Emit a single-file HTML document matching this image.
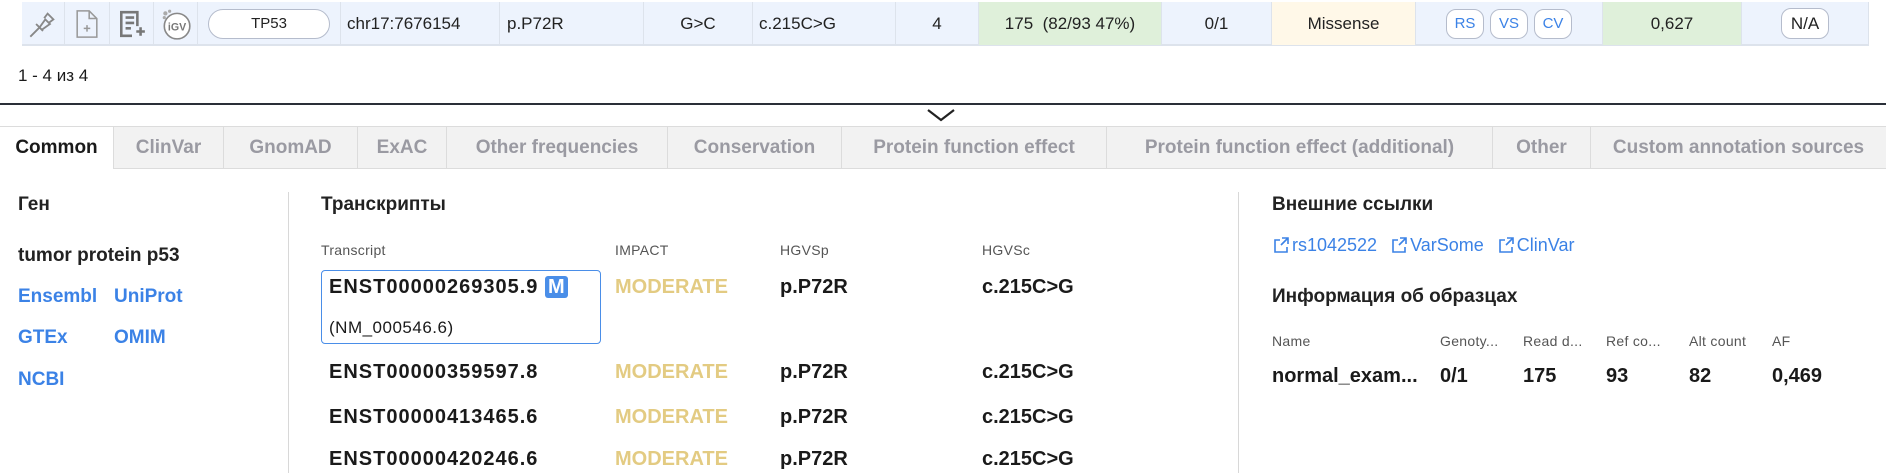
<!DOCTYPE html>
<html><head><meta charset="utf-8"><style>
*{margin:0;padding:0;box-sizing:border-box}
body{width:1886px;height:473px;overflow:hidden;background:#fff;font-family:"Liberation Sans",sans-serif;color:#1a1a1a;position:relative}
.a{position:absolute;white-space:nowrap}
.cell{position:absolute;top:2px;height:43px;border-right:1px solid #dde3ec;display:flex;align-items:center;justify-content:center;font-size:17px;color:#222}
.tab{position:absolute;top:127px;height:42px;border-right:1px solid #dcdcdc;display:flex;align-items:center;justify-content:center;font-size:19px;color:#9a9aa2;font-weight:bold;background:#f2f2f2}
.lnk{color:#3b82e6;font-weight:bold;font-size:19px}
.h{font-size:19px;font-weight:bold;color:#222}
.th{font-size:14px;color:#555;letter-spacing:0.3px}
.en{font-size:20px;font-weight:bold;color:#1a1a1a;letter-spacing:1px}
.mod{font-size:20px;font-weight:bold;color:#e3cb82}
.pv{font-size:20px;font-weight:bold}
.sv{font-size:20px;font-weight:bold}
.pill{border:1px solid #b5bccc;border-radius:10px;height:30px;display:inline-flex;align-items:center;justify-content:center;background:#fff}
.ext{display:inline-block;vertical-align:-2px;margin-right:3px}
</style></head><body>
<div class="a" style="left:22px;top:2px;width:1847px;height:44px;background:#edf3fd;border-bottom:2px solid #dde3ec"></div>
<div class="cell" style="left:22px;width:43px"><svg width="30" height="30" viewBox="0 0 26 26" fill="none" stroke="#888" stroke-width="1.6"><path d="M2 24l8-8M7 13l6 6M10 16l5-7 4 4-7 5M14 8l3-4 5 5-4 3"/></svg></div>
<div class="cell" style="left:65px;width:45px"><svg width="24" height="34" viewBox="0 0 22 30" fill="none" stroke="#999" stroke-width="1.4"><path d="M2 3h11l7 7v17H2z"/><path d="M13 3v7h7"/><path d="M8 19h6M11 16v6"/></svg></div>
<div class="cell" style="left:110px;width:44px"><svg width="28" height="30" viewBox="0 0 26 28" fill="none" stroke="#777" stroke-width="2.4"><path d="M18 16V3H3v22h10"/><path d="M7 8h8M7 13h8M7 18h5M17 21h8M21 17v8"/></svg></div>
<div class="cell" style="left:154px;width:44px"><svg width="34" height="34" viewBox="0 0 32 32"><circle cx="17" cy="18" r="12" fill="#fff" stroke="#888" stroke-width="1.5"/><circle cx="6" cy="6" r="2" fill="#aaa"/><circle cx="10" cy="4" r="1.5" fill="#aaa"/><circle cx="5" cy="10" r="1.5" fill="#aaa"/><text x="17" y="22" font-size="10" font-weight="bold" fill="#777" text-anchor="middle" font-family="Liberation Sans">iGV</text></svg></div>
<div class="cell" style="left:198px;width:143px"><span class="pill" style="width:122px;border-radius:16px;font-size:15px">TP53</span></div>
<div class="cell" style="left:341px;width:159px;justify-content:flex-start;padding-left:6px">chr17:7676154</div>
<div class="cell" style="left:500px;width:144px;justify-content:flex-start;padding-left:7px">p.P72R</div>
<div class="cell" style="left:644px;width:109px">G&gt;C</div>
<div class="cell" style="left:753px;width:143px;justify-content:flex-start;padding-left:6px">c.215C&gt;G</div>
<div class="cell" style="left:896px;width:83px">4</div>
<div class="cell" style="left:979px;width:183px;background:#dff0da">175&nbsp; (82/93 47%)</div>
<div class="cell" style="left:1162px;width:110px">0/1</div>
<div class="cell" style="left:1272px;width:144px;background:#fff8e8">Missense</div>
<div class="cell" style="left:1416px;width:187px;gap:6px;font-size:15px;color:#3b82e6"><span class="pill" style="width:38px">RS</span><span class="pill" style="width:38px">VS</span><span class="pill" style="width:38px">CV</span></div>
<div class="cell" style="left:1603px;width:139px;background:#dff0da">0,627</div>
<div class="cell" style="left:1742px;width:127px"><span class="pill" style="width:48px;height:31px">N/A</span></div>
<div class="a" style="left:18px;top:66px;font-size:17px">1 - 4 из 4</div>
<div class="a" style="left:0;top:103px;width:1886px;height:2px;background:#2a2f38"></div>
<svg class="a" style="left:925px;top:107px" width="32" height="16" viewBox="0 0 32 16"><path d="M3 3l13 10 13-10" fill="none" stroke="#222" stroke-width="2.2"/></svg>
<div class="a" style="left:0;top:126px;width:1886px;height:1px;background:#dcdcdc"></div>
<div class="tab" style="left:0;width:114px;background:#fff;color:#1a1a1a">Common</div>
<div class="tab" style="left:114px;width:110px">ClinVar</div>
<div class="tab" style="left:224px;width:134px">GnomAD</div>
<div class="tab" style="left:358px;width:89px">ExAC</div>
<div class="tab" style="left:447px;width:221px">Other frequencies</div>
<div class="tab" style="left:668px;width:174px">Conservation</div>
<div class="tab" style="left:842px;width:265px">Protein function effect</div>
<div class="tab" style="left:1107px;width:386px">Protein function effect (additional)</div>
<div class="tab" style="left:1493px;width:98px">Other</div>
<div class="tab" style="left:1591px;width:295px;border-right:none">Custom annotation sources</div>
<div class="a" style="left:114px;top:168px;width:1772px;height:1px;background:#dcdcdc"></div>
<div class="a h" style="left:18px;top:194px">Ген</div>
<div class="a h" style="left:18px;top:245px">tumor protein p53</div>
<div class="a lnk" style="left:18px;top:286px">Ensembl</div>
<div class="a lnk" style="left:114px;top:286px">UniProt</div>
<div class="a lnk" style="left:18px;top:327px">GTEx</div>
<div class="a lnk" style="left:114px;top:327px">OMIM</div>
<div class="a lnk" style="left:18px;top:369px">NCBI</div>
<div class="a" style="left:288px;top:192px;width:1px;height:281px;background:#d8d8d8"></div>
<div class="a h" style="left:321px;top:194px">Транскрипты</div>
<div class="a th" style="left:321px;top:242px">Transcript</div>
<div class="a th" style="left:615px;top:242px">IMPACT</div>
<div class="a th" style="left:780px;top:242px">HGVSp</div>
<div class="a th" style="left:982px;top:242px">HGVSc</div>
<div class="a" style="left:321px;top:270px;width:280px;height:74px;border:1.5px solid #4a8ee8;border-radius:4px"></div>
<div class="a en" style="left:329px;top:276px">ENST00000269305.9 <span style="background:#4a8ee8;color:#fff;border-radius:3px;padding:0 3px;letter-spacing:0">M</span></div>
<div class="a" style="left:329px;top:318px;font-size:17px;letter-spacing:0.5px">(NM_000546.6)</div>
<div class="a en" style="left:329px;top:361px">ENST00000359597.8</div>
<div class="a en" style="left:329px;top:406px">ENST00000413465.6</div>
<div class="a en" style="left:329px;top:448px">ENST00000420246.6</div>
<div class="a mod" style="left:615px;top:276px">MODERATE</div>
<div class="a mod" style="left:615px;top:361px">MODERATE</div>
<div class="a mod" style="left:615px;top:406px">MODERATE</div>
<div class="a mod" style="left:615px;top:448px">MODERATE</div>
<div class="a pv" style="left:780px;top:276px">p.P72R</div>
<div class="a pv" style="left:780px;top:361px">p.P72R</div>
<div class="a pv" style="left:780px;top:406px">p.P72R</div>
<div class="a pv" style="left:780px;top:448px">p.P72R</div>
<div class="a pv" style="left:982px;top:276px">c.215C&gt;G</div>
<div class="a pv" style="left:982px;top:361px">c.215C&gt;G</div>
<div class="a pv" style="left:982px;top:406px">c.215C&gt;G</div>
<div class="a pv" style="left:982px;top:448px">c.215C&gt;G</div>
<div class="a" style="left:1238px;top:192px;width:1px;height:281px;background:#d8d8d8"></div>
<div class="a h" style="left:1272px;top:194px">Внешние ссылки</div>
<div class="a" style="left:1274px;top:235px;font-size:18px;color:#3b82e6">
<svg class="ext" width="15" height="16" viewBox="0 0 15 16" fill="none" stroke="#3b82e6" stroke-width="1.6"><path d="M6 3H1v12h12v-5M8 1h6v6M14 1L7 8"/></svg>rs1042522&nbsp;&nbsp;
<svg class="ext" width="15" height="16" viewBox="0 0 15 16" fill="none" stroke="#3b82e6" stroke-width="1.6"><path d="M6 3H1v12h12v-5M8 1h6v6M14 1L7 8"/></svg>VarSome&nbsp;&nbsp;
<svg class="ext" width="15" height="16" viewBox="0 0 15 16" fill="none" stroke="#3b82e6" stroke-width="1.6"><path d="M6 3H1v12h12v-5M8 1h6v6M14 1L7 8"/></svg>ClinVar</div>
<div class="a h" style="left:1272px;top:286px">Информация об образцах</div>
<div class="a th" style="left:1272px;top:333px">Name</div>
<div class="a th" style="left:1440px;top:333px">Genoty...</div>
<div class="a th" style="left:1523px;top:333px">Read d...</div>
<div class="a th" style="left:1606px;top:333px">Ref co...</div>
<div class="a th" style="left:1689px;top:333px">Alt count</div>
<div class="a th" style="left:1772px;top:333px">AF</div>
<div class="a sv" style="left:1272px;top:365px">normal_exam...</div>
<div class="a sv" style="left:1440px;top:365px">0/1</div>
<div class="a sv" style="left:1523px;top:365px">175</div>
<div class="a sv" style="left:1606px;top:365px">93</div>
<div class="a sv" style="left:1689px;top:365px">82</div>
<div class="a sv" style="left:1772px;top:365px">0,469</div>
</body></html>
